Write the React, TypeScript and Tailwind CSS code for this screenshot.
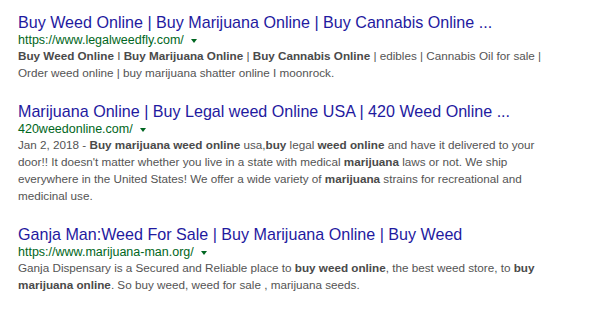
import React from "react"

type Part = { t: string; b?: boolean }

type Result = {
  title: string
  url: string
  lines: Part[][]
}

const results: Result[] = [
  {
    title: "Buy Weed Online | Buy Marijuana Online | Buy Cannabis Online ...",
    url: "https://www.legalweedfly.com/",
    lines: [
      [
        { t: "Buy Weed Online", b: true },
        { t: " I " },
        { t: "Buy Marijuana Online", b: true },
        { t: " | " },
        { t: "Buy Cannabis Online", b: true },
        { t: " | edibles | Cannabis Oil for sale |" },
      ],
      [{ t: "Order weed online | buy marijuana shatter online I moonrock." }],
    ],
  },
  {
    title: "Marijuana Online | Buy Legal weed Online USA | 420 Weed Online ...",
    url: "420weedonline.com/",
    lines: [
      [
        { t: "Jan 2, 2018 - " },
        { t: "Buy marijuana weed online", b: true },
        { t: " usa," },
        { t: "buy", b: true },
        { t: " legal " },
        { t: "weed online", b: true },
        { t: " and have it delivered to your" },
      ],
      [
        { t: "door!! It doesn't matter whether you live in a state with medical " },
        { t: "marijuana", b: true },
        { t: " laws or not. We ship" },
      ],
      [
        { t: "everywhere in the United States! We offer a wide variety of " },
        { t: "marijuana", b: true },
        { t: " strains for recreational and" },
      ],
      [{ t: "medicinal use." }],
    ],
  },
  {
    title: "Ganja Man:Weed For Sale | Buy Marijuana Online | Buy Weed",
    url: "https://www.marijuana-man.org/",
    lines: [
      [
        { t: "Ganja Dispensary is a Secured and Reliable place to " },
        { t: "buy weed online", b: true },
        { t: ", the best weed store, to " },
        { t: "buy", b: true },
      ],
      [
        { t: "marijuana online", b: true },
        { t: ". So buy weed, weed for sale , marijuana seeds." },
      ],
    ],
  },
]

function SearchResult({ r }: { r: Result }) {
  return (
    <div className="mb-[19px]">
      <a className="block text-[16.1px] leading-[22px] text-[#1f1aa0] whitespace-nowrap">{r.title}</a>
      <div className="flex items-center text-[12.5px] leading-[14px] text-[#006621]">
        <span>{r.url}</span>
        <svg width="6" height="4" viewBox="0 0 6 4" className="ml-[7px] mt-[1px]">
          <path d="M0 0 L6 0 L3 4 Z" fill="#006621" />
        </svg>
      </div>
      <div className="text-[11.7px] leading-[17px] text-[#545454]">
        {r.lines.map((line, i) => (
          <div key={i} className="whitespace-nowrap">
            {line.map((p, j) =>
              p.b ? (
                <b key={j} className="font-bold text-[#4a4a4a]">
                  {p.t}
                </b>
              ) : (
                <span key={j}>{p.t}</span>
              )
            )}
          </div>
        ))}
      </div>
    </div>
  )
}

export default function App() {
  return (
    <div className="w-[600px] h-[318px] bg-white overflow-hidden pl-[18px] pt-[11px] font-['Liberation_Sans',Arial,sans-serif]">
      {results.map((r, i) => (
        <SearchResult key={i} r={r} />
      ))}
    </div>
  )
}
